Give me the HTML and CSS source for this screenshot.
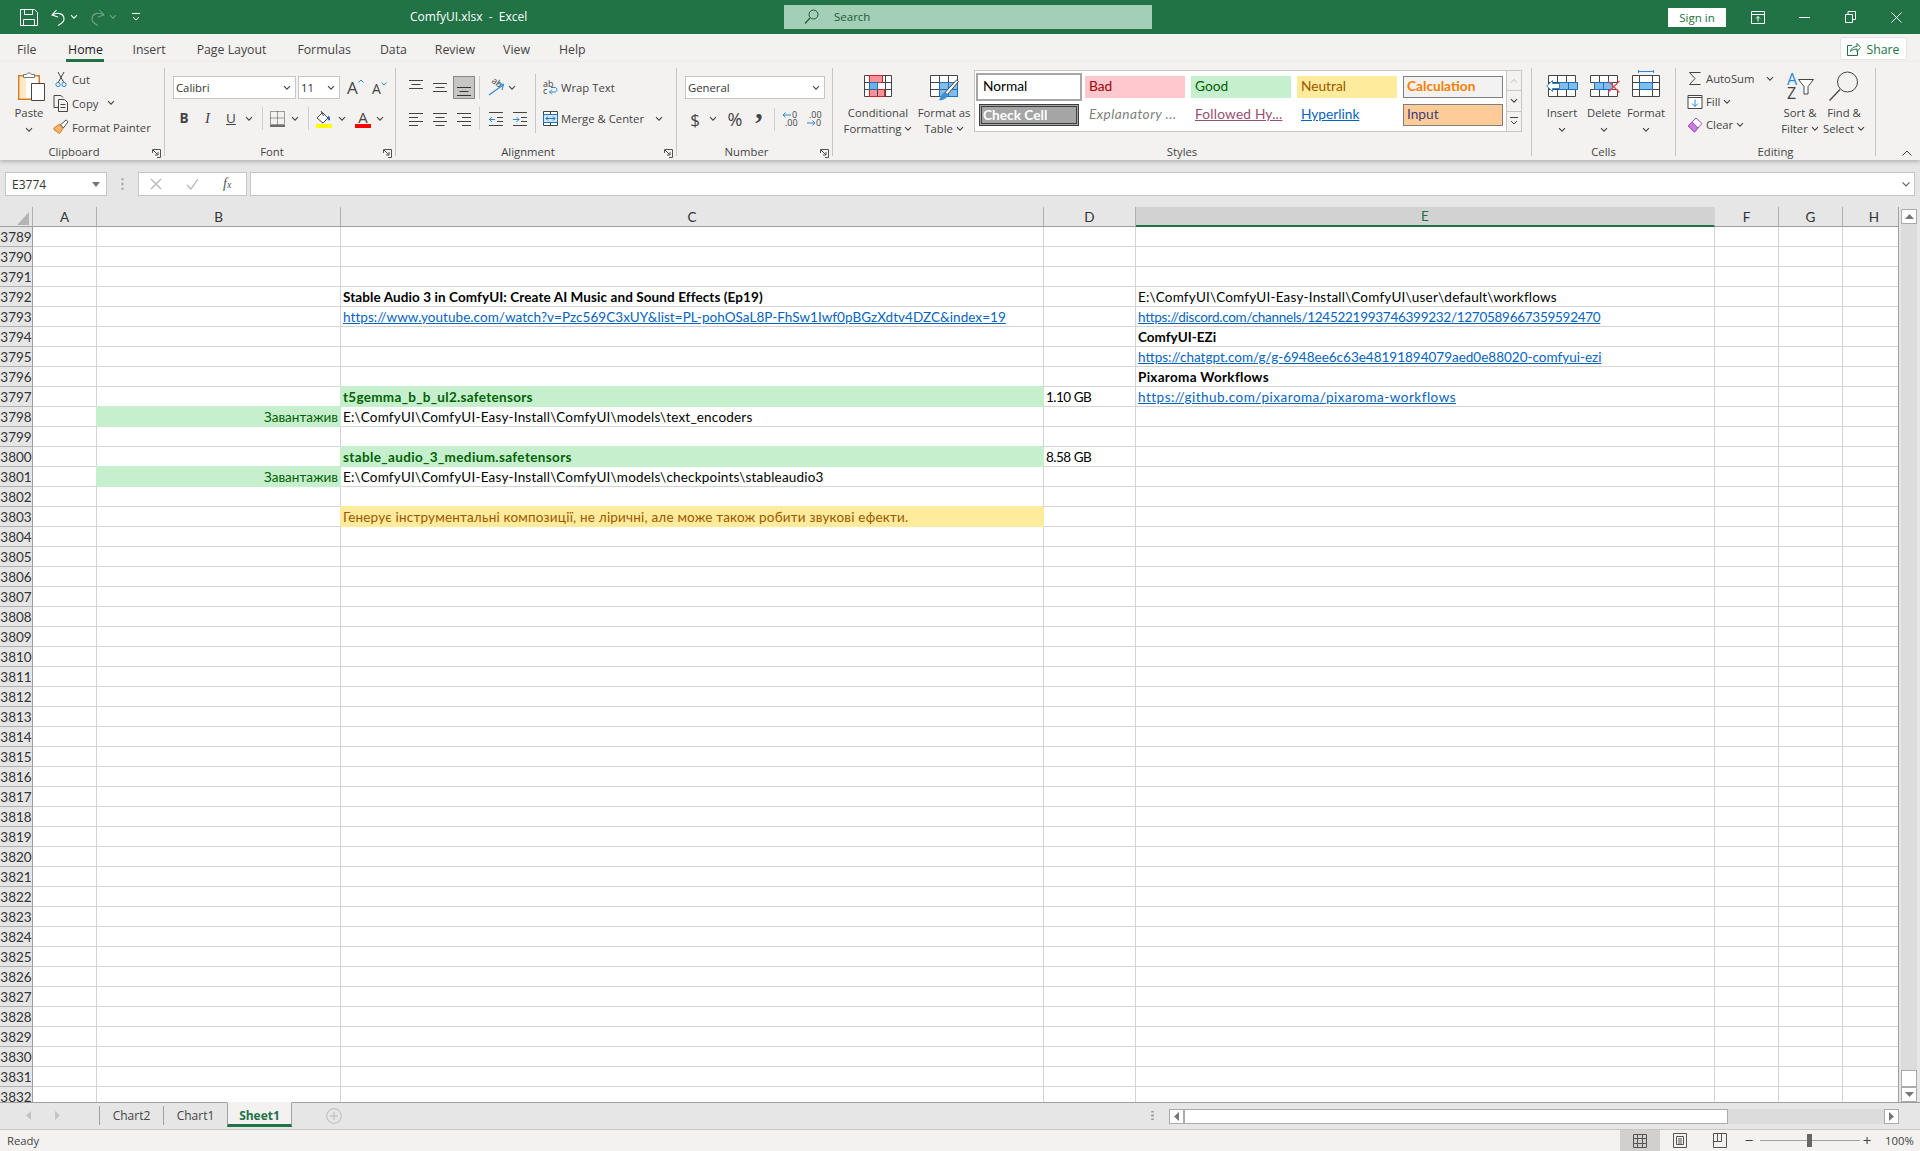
FILE: index.html
```html
<!DOCTYPE html>
<html lang="en">
<head>
<meta charset="utf-8">
<title>ComfyUI.xlsx - Excel</title>
<link rel="stylesheet" href="styles.css">
</head>
<body>
<svg class="sprite" xmlns="http://www.w3.org/2000/svg">
  <symbol id="caret" viewBox="0 0 8 6"><path d="M1 1.2l3 3 3-3" fill="none" stroke="currentColor" stroke-width="1.1"/></symbol>
  <symbol id="lines-left" viewBox="0 0 14 14"><path d="M0 1.5h14M0 5.5h9M0 9.5h14M0 13.5h9" fill="none" stroke="#444" /></symbol>
  <symbol id="lines-center" viewBox="0 0 14 14"><path d="M0 1.5h14M2.500 5.500h9M0 9.500h14M2.500 13.500h9" fill="none" stroke="#444" /></symbol>
  <symbol id="lines-right" viewBox="0 0 14 14"><path d="M0 1.5h14M5 5.5h9M0 9.500h14M5 13.500h9" fill="none" stroke="#444" /></symbol>
</svg>

<header class="titlebar">
  <div class="qat">
    <svg class="q-save" width="18" height="17" viewBox="0 0 18 17"><path d="M.5.500h14l3 3v13H.5zM4.500.500v5h8v-5M3.500 16.500v-6h11v6" fill="none" stroke="#fff"/></svg>
    <svg class="q-undo" width="14" height="17" viewBox="0 0 14 17"><path d="M5.500 1L1 6l6 2M1 6c5-3 12-2 12 4 0 3-3 5-6 6.500" fill="none" stroke="#fff" stroke-width="1.100"/></svg>
    <svg class="q-caret" width="8" height="6"><use href="#caret"/></svg>
    <svg class="q-redo" width="14" height="17" viewBox="0 0 14 17"><path d="M8.500 1L13 6 7 8M13 6C8 3 1 4 1 10c0 3 3 5 6 6.500" fill="none" stroke="#6ba587" stroke-width="1.100"/></svg>
    <svg class="q-caret dim" width="8" height="6"><use href="#caret"/></svg>
    <svg class="q-more" width="8" height="8" viewBox="0 0 8 8"><path d="M0 .5h8M1 4l3 3 3-3" fill="none" stroke="#fff"/></svg>
  </div>
  <div class="doc-title">ComfyUI.xlsx&nbsp; - &nbsp;Excel</div>
  <div class="search">
    <svg width="15" height="15" viewBox="0 0 15 15"><circle cx="9.500" cy="5.500" r="4.500" fill="none" stroke="#1b5e3b"/><path d="M6 9l-5 5.500" stroke="#1b5e3b" stroke-width="1.200"/></svg>
    <span>Search</span>
  </div>
  <button class="signin">Sign in</button>
  <div class="winbtns">
    <svg width="14" height="13" viewBox="0 0 14 13"><path d="M.5.500h13v12H.5zM.5 3.500h13M7 10.500V5.500M5 7.500l2-2 2 2" fill="none" stroke="#fff"/></svg>
    <svg width="11" height="11" viewBox="0 0 11 11"><path d="M0 5.500h11" stroke="#fff"/></svg>
    <svg width="11" height="12" viewBox="0 0 11 12"><path d="M.5 3.500h7v8h-7zM3 3.500v-3h7.500v8H7.500" fill="none" stroke="#fff"/></svg>
    <svg width="11" height="11" viewBox="0 0 11 11"><path d="M.5.500l10 10M10.500.500l-10 10" stroke="#fff"/></svg>
  </div>
</header>

<nav class="tabs">
  <span>File</span>
  <span class="on">Home</span>
  <span>Insert</span>
  <span>Page Layout</span>
  <span>Formulas</span>
  <span>Data</span>
  <span>Review</span>
  <span>View</span>
  <span>Help</span>
  <button class="share">
    <svg width="14" height="14" viewBox="0 0 14 14"><path d="M5 3.500H.5v10h10V9M3.500 9.500C4 6 7 4.500 10 4.500V1.500l3.500 4-3.500 4V7C7 7 5 8 3.500 9.500z" fill="none" stroke="#217346"/></svg>
    Share
  </button>
</nav>

<section class="ribbon">

  <div class="grp clip">
    <div class="body">
      <div class="big paste">
        <div class="big-ico">
          <svg width="28" height="30" viewBox="0 0 28 30"><path d="M.75 3.750h20.500v23.500H.75z" fill="#fff" stroke="#d97a13" stroke-width="1.500"/><path d="M2 5h6v21H2z" fill="#fde9c4"/><path d="M5.500 5.500V2.500h3C8.500.500 13.500.500 13.500 2.500h3v3z" fill="#fff" stroke="#777"/><path d="M13.500 11.500h13v17h-13z" fill="#fff" stroke="#444"/></svg>
        </div>
        <div>Paste</div>
        <svg class="car" width="8" height="6"><use href="#caret"/></svg>
      </div>
      <div class="small-col">
        <div class="small">
          <svg class="s-ico" width="16" height="17" viewBox="0 0 16 17"><path d="M5 1l5.500 10M11 1L5.500 11" stroke="#444" fill="none"/><circle cx="5" cy="13.500" r="2.100" fill="none" stroke="#2b88d8"/><circle cx="11" cy="13.500" r="2.100" fill="none" stroke="#2b88d8"/></svg>
          Cut
        </div>
        <div class="small">
          <svg class="s-ico" width="16" height="18" viewBox="0 0 16 18"><path d="M5 13.500H1V1.500h7l2 2M5.500 5.500h6l3 3v9h-9zM7.500 10.500h5M7.500 13.500h5" fill="none" stroke="#444"/></svg>
          Copy <svg class="car copy-car" width="8" height="6"><use href="#caret"/></svg>
        </div>
        <div class="small">
          <svg class="s-ico" width="17" height="16" viewBox="0 0 17 16"><path d="M1 9l6-4 4 4-4 6-6-4z" fill="#f5b26b" stroke="#d97a13"/><path d="M8 5.500l6-5 2 2-5 6.500z" fill="#fff" stroke="#444"/></svg>
          Format Painter
        </div>
      </div>
    </div>
    <div class="label"><span>Clipboard</span><svg class="launch" width="9" height="9" viewBox="0 0 9 9"><path d="M.5 4V.5h8v8H5M1 1l5 5M6 3v3H3" fill="none" stroke="#555"/></svg></div>
  </div>

  <div class="grp font">
    <div class="body stack">
      <div class="row1">
        <div class="combo w-font">Calibri<svg class="car" width="8" height="6"><use href="#caret"/></svg></div>
        <div class="combo w-size">11<svg class="car" width="8" height="6"><use href="#caret"/></svg></div>
        <span class="grow">A<svg width="6" height="4" viewBox="0 0 6 4"><path d="M.5 3.500L3 1l2.500 2.500" fill="none" stroke="#2b88d8"/></svg></span>
        <span class="shrink">A<svg width="6" height="4" viewBox="0 0 6 4"><path d="M.5.500L3 3 5.500.500" fill="none" stroke="#2b88d8"/></svg></span>
      </div>
      <div class="font-tools">
        <b class="fa">B</b>
        <i class="fa it">I</i>
        <u class="fa">U</u>
        <svg width="8" height="6"><use href="#caret"/></svg>
        <span class="vsep"></span>
        <svg width="15" height="16" viewBox="0 0 15 16"><path d="M.5.500h14v13H.5zM7.500.500v13M.500 7h14" fill="none" stroke="#444" stroke-dasharray="1 1"/><path d="M0 15h15" stroke="#222" stroke-width="1.300"/></svg>
        <svg width="8" height="6"><use href="#caret"/></svg>
        <span class="vsep"></span>
        <svg width="16" height="18" viewBox="0 0 16 18"><path d="M1 8l5.500-5.500L12 8l-5 5z" fill="#fff" stroke="#444"/><path d="M5 1l2.500 5" stroke="#444"/><path d="M12.500 5.500c2 2 2 5 .5 5-1.500 0-1.500-3-.5-5z" fill="#1f6fb5"/><path d="M0 14h16v4H0z" fill="#ff0"/></svg>
        <svg width="8" height="6"><use href="#caret"/></svg>
        <span class="fcolor">A<em></em></span>
        <svg width="8" height="6"><use href="#caret"/></svg>
      </div>
    </div>
    <div class="label"><span>Font</span><svg class="launch" width="9" height="9" viewBox="0 0 9 9"><path d="M.5 4V.5h8v8H5M1 1l5 5M6 3v3H3" fill="none" stroke="#555"/></svg></div>
  </div>

  <div class="grp align">
    <div class="body">
      <div class="stack">
        <div class="al-row">
          <span class="ab"><svg width="14" height="23" viewBox="0 0 14 23"><path d="M0 4.500h14M2.500 8.500h9M0 12.500h14" stroke="#444"/></svg></span>
          <span class="ab"><svg width="14" height="23" viewBox="0 0 14 23"><path d="M0 7.500h14M2.500 11.500h9M0 15.500h14" stroke="#444"/></svg></span>
          <span class="ab sel"><svg width="14" height="23" viewBox="0 0 14 23"><path d="M0 11.500h14M2.500 15.500h9M0 19.500h14" stroke="#333"/></svg></span>
          <span class="vsep"></span>
          <span class="ab"><svg class="ov" width="17" height="16" viewBox="0 0 17 16"><text x="3" y="2" transform="rotate(35 3 2)" class="svg-n">ab</text><path d="M1 15L15 5M10 3.500l5.500 1-1.500 5.500" stroke="#2b88d8" fill="none" stroke-width="1.100"/></svg></span>
          <svg width="8" height="6"><use href="#caret"/></svg>
        </div>
        <div class="al-row">
          <span class="ab"><svg width="14" height="14"><use href="#lines-left"/></svg></span>
          <span class="ab"><svg width="14" height="14"><use href="#lines-center"/></svg></span>
          <span class="ab"><svg width="14" height="14"><use href="#lines-right"/></svg></span>
          <span class="vsep"></span>
          <span class="ab"><svg width="14" height="14" viewBox="0 0 14 14"><path d="M0 .5h14M8 5.500h6M8 9.500h6M0 13.500h14" stroke="#444"/><path d="M6 7.500H0M3 5L.5 7.500 3 10" fill="none" stroke="#2b88d8"/></svg></span>
          <span class="ab"><svg width="14" height="14" viewBox="0 0 14 14"><path d="M0 .5h14M8 5.500h6M8 9.500h6M0 13.500h14" stroke="#444"/><path d="M0 7.500h6M3.500 5L6 7.500 3.500 10" fill="none" stroke="#2b88d8"/></svg></span>
        </div>
      </div>
      <span class="tall-sep"></span>
      <div class="stack wrap-col">
        <div class="small">
          <svg class="s-ico ov" width="15" height="15" viewBox="0 0 15 15"><text x="0" y="7" class="svg-ab">ab</text><text x="0" y="14" class="svg-ab">c</text><path d="M6.500 12h5.500c2.500 0 2.500-4.500 0-4.500H8M9 9.500l-2.500 2.500 2.500 2.500" fill="none" stroke="#2b88d8"/></svg>
          Wrap Text
        </div>
        <div class="small">
          <svg class="s-ico" width="15" height="15" viewBox="0 0 15 15"><path d="M.5.500h14v14H.5z" fill="#fff" stroke="#444"/><path d="M.5 3.500h14v8H.5z" fill="#cfe6f7" stroke="#1f6fb5"/><path d="M7.500.500v3M7.500 11.500v3" stroke="#444"/><path d="M3 7.500h9M5 5.500l-2 2 2 2M10 5.500l2 2-2 2" fill="none" stroke="#1f6fb5"/></svg>
          Merge &amp; Center <svg class="car merge-car" width="8" height="6"><use href="#caret"/></svg>
        </div>
      </div>
    </div>
    <div class="label"><span>Alignment</span><svg class="launch" width="9" height="9" viewBox="0 0 9 9"><path d="M.5 4V.5h8v8H5M1 1l5 5M6 3v3H3" fill="none" stroke="#555"/></svg></div>
  </div>

  <div class="grp number">
    <div class="body stack">
      <div class="combo w-num">General<svg class="car" width="8" height="6"><use href="#caret"/></svg></div>
      <div class="num-tools">
        <span class="dollar">$</span>
        <svg width="8" height="6"><use href="#caret"/></svg>
        <span class="pct">%</span>
        <b class="comma">,</b>
        <span class="vsep"></span>
        <svg class="ov" width="16" height="16" viewBox="0 0 16 16"><text x="10" y="7" class="svg-n">0</text><text x="3" y="15" class="svg-n">.00</text><path d="M9 4H1M3.500 1.500L1 4l2.500 2.500" fill="none" stroke="#2b88d8"/></svg>
        <svg class="ov" width="16" height="16" viewBox="0 0 16 16"><text x="3" y="7" class="svg-n">.00</text><text x="10" y="15" class="svg-n">0</text><path d="M1 12h8M6.500 9.500L9 12l-2.500 2.500" fill="none" stroke="#2b88d8"/></svg>
      </div>
    </div>
    <div class="label"><span>Number</span><svg class="launch" width="9" height="9" viewBox="0 0 9 9"><path d="M.5 4V.5h8v8H5M1 1l5 5M6 3v3H3" fill="none" stroke="#555"/></svg></div>
  </div>

  <div class="grp styles">
    <div class="body">
      <div class="big w-cond">
        <div class="big-ico">
          <svg width="28" height="22" viewBox="0 0 28 22"><path d="M.5.500h27v21H.5z" fill="#fff"/><path d="M5.500.500h13v7h-13zM5.500 14.500h15v7h-15z" fill="#f7929a"/><path d="M5.500 7.500h8v7h-8z" fill="#6fb0e6"/><path d="M.5.500h27v21H.5zM5.500.500v21M21.500.500v21M.5 7.500h27M.5 14.500h27M13.500 14.500v7" fill="none" stroke="#444"/><path d="M5.500.500h13v7h-13zM5.500 14.500h15v7h-15z" fill="none" stroke="#d9202b"/><path d="M5.500 7.500h8v7h-8z" fill="none" stroke="#1f6fb5"/></svg>
        </div>
        <div>Conditional</div>
        <div>Formatting <svg class="car" width="8" height="6"><use href="#caret"/></svg></div>
      </div>
      <div class="big w-fat">
        <div class="big-ico">
          <svg width="30" height="27" viewBox="0 0 30 27"><path d="M1.500.500h27v21h-27z" fill="#fff"/><path d="M10.500 7.500h18v14h-18z" fill="#83bbeb"/><path d="M1.500.500h27v21h-27zM10.500.500v21M19.500.500v21M1.500 7.500h27M1.500 14.500h27" fill="none" stroke="#444"/><path d="M10.500 7.500h18v14h-18zM19.500 7.500v14M10.500 14.500h18" fill="none" stroke="#1f6fb5"/><path d="M29.500 6.500L18.500 19.500l-2.500-2L27.500 5z" fill="#fff" stroke="#444"/><path d="M16 17.500c3 0 3.500 4 .5 6s-6 2-7 1.500c2.500-1 2-7 6.500-7.500z" fill="#3d8fd1"/></svg>
        </div>
        <div>Format as</div>
        <div>Table <svg class="car" width="8" height="6"><use href="#caret"/></svg></div>
      </div>
      <div class="gallery">
        <div class="gal-grid">
          <div class="st st-normal">Normal</div>
          <div class="st st-bad">Bad</div>
          <div class="st st-good">Good</div>
          <div class="st st-neutral">Neutral</div>
          <div class="st st-calc">Calculation</div>
          <div class="st st-check">Check Cell</div>
          <div class="st st-expl">Explanatory ...</div>
          <div class="st st-follow">Followed Hy...</div>
          <div class="st st-link">Hyperlink</div>
          <div class="st st-input">Input</div>
        </div>
        <div class="gal-btns">
          <span class="dimmed"><svg width="8" height="6" viewBox="0 0 8 6"><path d="M1 4.500l3-3 3 3" fill="none" stroke="#bbb"/></svg></span>
          <span><svg width="8" height="6"><use href="#caret"/></svg></span>
          <span><svg width="8" height="8" viewBox="0 0 8 8"><path d="M0 .5h8M1 4l3 3 3-3" fill="none" stroke="#444"/></svg></span>
        </div>
      </div>
    </div>
    <div class="label"><span class="full">Styles</span></div>
  </div>

  <div class="grp cells">
    <div class="body">
      <div class="big w-cell">
        <div class="big-ico">
          <svg width="32" height="22" viewBox="0 0 32 22"><path d="M2.500.500h27v21h-27zM11.500.500v21M20.500.500v21M2.500 7.500h27M2.500 14.500h27" fill="#fff" stroke="#444"/><path d="M13.500 7.500h18v7h-18z" fill="#83bbeb"/><path d="M13.500 7.500h18v7h-18zM22.500 7.500v7" fill="none" stroke="#1f6fb5"/><path d="M.7 11L6.500 5.500v3h7v5h-7v3z" fill="#fff" stroke="#2b88d8"/></svg>
        </div>
        <div>Insert</div>
        <svg class="car" width="8" height="6"><use href="#caret"/></svg>
      </div>
      <div class="big w-cell">
        <div class="big-ico">
          <svg width="32" height="22" viewBox="0 0 32 22"><path d="M2.500.500h27v7h-23v7h23v7h-27v-7h4v-7h-4zM11.500.500v7M20.500.500v7M11.500 14.500v7M20.500 14.500v7" fill="#fff" stroke="#444"/><path d="M6.500 7.500h18v7h-18z" fill="#83bbeb"/><path d="M6.500 7.500h18v7h-18zM15.500 7.500v7" fill="none" stroke="#1f6fb5"/><path d="M20 6l11.500 11.500M31.500 6L20 17.500" stroke="#e8474f" stroke-width="1.200"/></svg>
        </div>
        <div>Delete</div>
        <svg class="car" width="8" height="6"><use href="#caret"/></svg>
      </div>
      <div class="big w-cell">
        <div class="big-ico">
          <svg width="28" height="27" viewBox="0 0 28 27"><path d="M6.500 1.500h15M6.500 0v3M21.500 0v3" stroke="#2b88d8" fill="none"/><path d="M.5 5.500h27v21H.5zM7.500 5.500v21M20.500 5.500v21M.5 12.500h27M.5 19.500h27" fill="#fff" stroke="#444"/><path d="M7.500 12.500h13v7h-13z" fill="#83bbeb" stroke="#1f6fb5"/></svg>
        </div>
        <div>Format</div>
        <svg class="car" width="8" height="6"><use href="#caret"/></svg>
      </div>
    </div>
    <div class="label"><span class="full">Cells</span></div>
  </div>

  <div class="grp editing">
    <div class="body">
      <div class="edit-col">
        <div class="e-row">
          <svg class="s-ico" width="13" height="13" viewBox="0 0 13 13"><path d="M12 .5H1l5.500 6L1 12.500h11" fill="none" stroke="#444"/></svg>
          AutoSum <svg class="car sum-car" width="8" height="6"><use href="#caret"/></svg>
        </div>
        <div class="e-row">
          <svg class="s-ico" width="15" height="14" viewBox="0 0 15 14"><path d="M.5.500h14v13H.5z" fill="#fff" stroke="#444"/><path d="M.5 2.500h14" stroke="#444"/><path d="M7.500 4.500v7M4.500 8.500l3 3 3-3" fill="none" stroke="#2b88d8"/></svg>
          Fill <svg class="car" width="8" height="6"><use href="#caret"/></svg>
        </div>
        <div class="e-row">
          <svg class="s-ico" width="16" height="16" viewBox="0 0 16 16"><path d="M1 9L9 1l6 5.500L7.500 15z" fill="#fff" stroke="#a64fc0"/><path d="M1 9L5 5l6 6-3.500 4z" fill="#c77fdb" stroke="#a64fc0"/></svg>
          Clear <svg class="car" width="8" height="6"><use href="#caret"/></svg>
        </div>
      </div>
      <div class="big w-find">
        <div class="big-ico">
          <svg class="ov" width="30" height="28" viewBox="0 0 30 28"><text x="2" y="13" class="svg-az az-a">A</text><text x="2" y="27" class="svg-az">Z</text><path d="M13.500 7.500h15l-5.500 7v7.500h-4v-7.500z" fill="#fff" stroke="#444"/></svg>
        </div>
        <div>Sort &amp;</div>
        <div>Filter <svg class="car" width="8" height="6"><use href="#caret"/></svg></div>
      </div>
      <div class="big w-find">
        <div class="big-ico">
          <svg class="ov" width="30" height="28" viewBox="0 0 30 28"><circle cx="18.500" cy="10" r="10" fill="none" stroke="#444"/><path d="M11 17.500L.5 28.500" stroke="#444" stroke-width="1.200"/></svg>
        </div>
        <div>Find &amp;</div>
        <div>Select <svg class="car" width="8" height="6"><use href="#caret"/></svg></div>
      </div>
    </div>
    <div class="label"><span class="full">Editing</span></div>
  </div>

  <div class="collapse">
    <svg width="10" height="6" viewBox="0 0 10 6"><path d="M.5 5.500L5 1l4.500 4.500" fill="none" stroke="#444"/></svg>
  </div>
</section>

<section class="formula">
  <div class="namebox">E3774<svg width="8" height="5" viewBox="0 0 8 5"><path d="M0 0h8L4 5z" fill="#777"/></svg></div>
  <div class="dots"></div>
  <div class="fxbox">
    <svg width="12" height="12" viewBox="0 0 12 12"><path d="M1 1l10 10M11 1L1 11" stroke="#b5b5b5" stroke-width="1.300"/></svg>
    <svg width="13" height="12" viewBox="0 0 13 12"><path d="M1 7l4 4 7-10" fill="none" stroke="#b5b5b5" stroke-width="1.300"/></svg>
    <i class="fx">f<small>x</small></i>
  </div>
  <div class="fxinput"><svg width="10" height="7"><use href="#caret"/></svg></div>
</section>

<section class="sheet">
  <div class="gridwrap">
    <table class="grid">
      <colgroup>
        <col class="c-rh"><col class="c-a"><col class="c-b"><col class="c-c"><col class="c-d"><col class="c-e"><col class="c-f"><col class="c-g"><col class="c-h">
      </colgroup>
      <thead>
        <tr><th class="corner"><svg width="12" height="13" viewBox="0 0 12 13"><path d="M12 0v13H0z" fill="#b5b5b5"/></svg></th><th>A</th><th>B</th><th>C</th><th>D</th><th class="sel-col">E</th><th>F</th><th>G</th><th class="cut-col">H</th></tr>
      </thead>
      <tbody>
        <tr><th>3789</th><td></td><td></td><td></td><td></td><td></td><td></td><td></td><td></td></tr>
        <tr><th>3790</th><td></td><td></td><td></td><td></td><td></td><td></td><td></td><td></td></tr>
        <tr><th>3791</th><td></td><td></td><td></td><td></td><td></td><td></td><td></td><td></td></tr>
        <tr><th>3792</th><td></td><td></td><td class="strong t-title">Stable Audio 3 in ComfyUI: Create AI Music and Sound Effects (Ep19)</td><td></td><td>E:\ComfyUI\ComfyUI-Easy-Install\ComfyUI\user\default\workflows</td><td></td><td></td><td></td></tr>
        <tr><th>3793</th><td></td><td></td><td class="link l-yt">https://www.youtube.com/watch?v=Pzc569C3xUY&amp;list=PL-pohOSaL8P-FhSw1Iwf0pBGzXdtv4DZC&amp;index=19</td><td></td><td class="link l-dc">https://discord.com/channels/1245221993746399232/1270589667359592470</td><td></td><td></td><td></td></tr>
        <tr><th>3794</th><td></td><td></td><td></td><td></td><td class="strong t-ezi">ComfyUI-EZi</td><td></td><td></td><td></td></tr>
        <tr><th>3795</th><td></td><td></td><td></td><td></td><td class="link l-gpt">https://chatgpt.com/g/g-6948ee6c63e48191894079aed0e88020-comfyui-ezi</td><td></td><td></td><td></td></tr>
        <tr><th>3796</th><td></td><td></td><td></td><td></td><td class="strong">Pixaroma Workflows</td><td></td><td></td><td></td></tr>
        <tr><th>3797</th><td></td><td></td><td class="good strong">t5gemma_b_b_ul2.safetensors</td><td class="size">1.10 GB</td><td class="link l-gh">https://github.com/pixaroma/pixaroma-workflows</td><td></td><td></td><td></td></tr>
        <tr><th>3798</th><td></td><td class="good right">Завантажив</td><td>E:\ComfyUI\ComfyUI-Easy-Install\ComfyUI\models\text_encoders</td><td></td><td></td><td></td><td></td><td></td></tr>
        <tr><th>3799</th><td></td><td></td><td></td><td></td><td></td><td></td><td></td><td></td></tr>
        <tr><th>3800</th><td></td><td></td><td class="good strong t-sa">stable_audio_3_medium.safetensors</td><td class="size">8.58 GB</td><td></td><td></td><td></td><td></td></tr>
        <tr><th>3801</th><td></td><td class="good right">Завантажив</td><td>E:\ComfyUI\ComfyUI-Easy-Install\ComfyUI\models\checkpoints\stableaudio3</td><td></td><td></td><td></td><td></td><td></td></tr>
        <tr><th>3802</th><td></td><td></td><td></td><td></td><td></td><td></td><td></td><td></td></tr>
        <tr><th>3803</th><td></td><td></td><td class="neutral">Генерує інструментальні композиції, не ліричні, але може також робити звукові ефекти.</td><td></td><td></td><td></td><td></td><td></td></tr>
        <tr><th>3804</th><td></td><td></td><td></td><td></td><td></td><td></td><td></td><td></td></tr>
        <tr><th>3805</th><td></td><td></td><td></td><td></td><td></td><td></td><td></td><td></td></tr>
        <tr><th>3806</th><td></td><td></td><td></td><td></td><td></td><td></td><td></td><td></td></tr>
        <tr><th>3807</th><td></td><td></td><td></td><td></td><td></td><td></td><td></td><td></td></tr>
        <tr><th>3808</th><td></td><td></td><td></td><td></td><td></td><td></td><td></td><td></td></tr>
        <tr><th>3809</th><td></td><td></td><td></td><td></td><td></td><td></td><td></td><td></td></tr>
        <tr><th>3810</th><td></td><td></td><td></td><td></td><td></td><td></td><td></td><td></td></tr>
        <tr><th>3811</th><td></td><td></td><td></td><td></td><td></td><td></td><td></td><td></td></tr>
        <tr><th>3812</th><td></td><td></td><td></td><td></td><td></td><td></td><td></td><td></td></tr>
        <tr><th>3813</th><td></td><td></td><td></td><td></td><td></td><td></td><td></td><td></td></tr>
        <tr><th>3814</th><td></td><td></td><td></td><td></td><td></td><td></td><td></td><td></td></tr>
        <tr><th>3815</th><td></td><td></td><td></td><td></td><td></td><td></td><td></td><td></td></tr>
        <tr><th>3816</th><td></td><td></td><td></td><td></td><td></td><td></td><td></td><td></td></tr>
        <tr><th>3817</th><td></td><td></td><td></td><td></td><td></td><td></td><td></td><td></td></tr>
        <tr><th>3818</th><td></td><td></td><td></td><td></td><td></td><td></td><td></td><td></td></tr>
        <tr><th>3819</th><td></td><td></td><td></td><td></td><td></td><td></td><td></td><td></td></tr>
        <tr><th>3820</th><td></td><td></td><td></td><td></td><td></td><td></td><td></td><td></td></tr>
        <tr><th>3821</th><td></td><td></td><td></td><td></td><td></td><td></td><td></td><td></td></tr>
        <tr><th>3822</th><td></td><td></td><td></td><td></td><td></td><td></td><td></td><td></td></tr>
        <tr><th>3823</th><td></td><td></td><td></td><td></td><td></td><td></td><td></td><td></td></tr>
        <tr><th>3824</th><td></td><td></td><td></td><td></td><td></td><td></td><td></td><td></td></tr>
        <tr><th>3825</th><td></td><td></td><td></td><td></td><td></td><td></td><td></td><td></td></tr>
        <tr><th>3826</th><td></td><td></td><td></td><td></td><td></td><td></td><td></td><td></td></tr>
        <tr><th>3827</th><td></td><td></td><td></td><td></td><td></td><td></td><td></td><td></td></tr>
        <tr><th>3828</th><td></td><td></td><td></td><td></td><td></td><td></td><td></td><td></td></tr>
        <tr><th>3829</th><td></td><td></td><td></td><td></td><td></td><td></td><td></td><td></td></tr>
        <tr><th>3830</th><td></td><td></td><td></td><td></td><td></td><td></td><td></td><td></td></tr>
        <tr><th>3831</th><td></td><td></td><td></td><td></td><td></td><td></td><td></td><td></td></tr>
        <tr><th>3832</th><td></td><td></td><td></td><td></td><td></td><td></td><td></td><td></td></tr>
      </tbody>
    </table>
  </div>
  <aside class="vscroll">
    <span class="sb-btn"><svg width="9" height="5" viewBox="0 0 9 5"><path d="M4.500 0L9 5H0z" fill="#777"/></svg></span>
    <span class="sb-track"></span>
    <span class="sb-thumb"></span>
    <span class="sb-btn"><svg width="9" height="5" viewBox="0 0 9 5"><path d="M0 0h9L4.500 5z" fill="#777"/></svg></span>
  </aside>
</section>

<section class="sheetbar">
  <div class="sheet-nav">
    <svg width="5" height="9" viewBox="0 0 5 9"><path d="M5 0v9L0 4.500z" fill="#c4c4c4"/></svg>
    <svg width="5" height="9" viewBox="0 0 5 9"><path d="M0 0v9l5-4.500z" fill="#c4c4c4"/></svg>
  </div>
  <div class="sheet-tab">Chart2</div>
  <div class="sheet-tab">Chart1</div>
  <div class="sheet-tab active">Sheet1</div>
  <div class="add-sheet"><svg width="16" height="16" viewBox="0 0 16 16"><circle cx="8" cy="8" r="7.300" fill="none" stroke="#c4c4c4" stroke-width="1.200"/><path d="M8 4v8M4 8h8" stroke="#c4c4c4" stroke-width="1.300"/></svg></div>
  <div class="splitter"></div>
  <div class="hscroll">
    <span class="hb"><svg width="5" height="9" viewBox="0 0 5 9"><path d="M5 0v9L0 4.500z" fill="#777"/></svg></span>
    <span class="hthumb"></span>
    <span class="htrack"></span>
    <span class="hb"><svg width="5" height="9" viewBox="0 0 5 9"><path d="M0 0v9l5-4.500z" fill="#777"/></svg></span>
  </div>
</section>

<footer class="status">
  <span class="ready">Ready</span>
  <div class="views">
    <span class="view on"><svg width="14" height="14" viewBox="0 0 14 14"><path d="M.5.500h13v13H.5zM4.500.500v13M9.500.500v13M.5 4.500h13M.5 9.500h13" fill="none" stroke="#555"/></svg></span>
    <span class="view"><svg width="14" height="15" viewBox="0 0 14 15"><path d="M.5.500h13v14H.5zM3.500 3.500h7v8h-7zM5 6h4M5 8h4M5 10h4" fill="none" stroke="#555"/></svg></span>
    <span class="view"><svg width="14" height="15" viewBox="0 0 14 15"><path d="M.5.500h13v14H.5zM.5 8.500h8M8.500.500v8M4.500.500v8" fill="none" stroke="#555"/></svg></span>
  </div>
  <div class="zoom">
    <span class="zm">−</span>
    <span class="slider"><em></em></span>
    <span class="zm">+</span>
    <span class="pctz">100%</span>
  </div>
</footer>
</body>
</html>
```

FILE: styles.css
```css
* { box-sizing: border-box; }
html, body { margin: 0; height: 100%; overflow: hidden; }
body {
  font-family: "Open Sans", sans-serif;
  font-size: 11.3px;
  color: #444;
  background: #e6e6e6;
}
svg { display: block; flex: none; }
svg.ov { overflow: visible; }
.sprite { display: none; }
button { font: inherit; border: 0; padding: 0; }

/* title bar */
.titlebar {
  height: 34px;
  background: #217346;
  color: #fff;
  display: flex;
  align-items: center;
}
.qat { width: 410px; display: flex; align-items: center; padding-left: 20px; color: #fff; }
.q-undo { margin-left: 13px; }
.q-caret { margin-left: 5px; }
.q-caret.dim { color: #6ba587; margin-left: 4px; }
.q-redo { margin-left: 13px; }
.q-more { margin-left: 15px; }
.doc-title { width: 374px; font-size: 12px; padding-bottom: 2px; }
.search {
  width: 368px;
  height: 24px;
  background: #a3cfb7;
  color: #1b5e3b;
  display: flex;
  align-items: center;
  padding: 0 0 1px 20px;
  gap: 15px;
  font-size: 11.5px;
}
.signin {
  margin-left: auto;
  width: 58px;
  height: 19px;
  background: #fff;
  color: #217346;
  font-size: 11.5px;
}
.winbtns { width: 194px; padding-left: 9px; display: grid; grid-template-columns: repeat(4, 46px); justify-items: center; align-items: center; }

/* tabs */
.tabs {
  height: 28px;
  background: #f3f2f1;
  display: flex;
  gap: 29px;
  padding-left: 17px;
  line-height: 31px;
  font-size: 12.3px;
}
.tabs .on { width: 38px; text-align: center; color: #222; font-weight: 500; border-bottom: 3px solid #217346; margin-left: 1px; margin-right: -1px; }
.tabs span:nth-child(3) { margin-right: 2px; }
.tabs span:nth-child(4) { margin-right: 2px; }
.tabs span:nth-child(6) { margin-right: -1px; }
.tabs span:nth-child(7) { margin-right: -1px; }
.share {
  margin: 3px 13px 2px auto;
  width: 67px;
  background: #fff;
  border: 1px solid #e4e3e1;
  border-radius: 2px;
  color: #217346;
  display: flex;
  align-items: center;
  justify-content: center;
  gap: 5px;
  font-size: 12.3px;
  padding-top: 1px;
}

/* ribbon */
.ribbon {
  height: 98px;
  background: #f3f2f1;
  display: flex;
  padding-top: 6px;
  position: relative;
  box-shadow: 0 2px 4px rgba(0,0,0,.22);
}
.grp {
  height: 88px;
  border-right: 1px solid #c8c6c4;
  display: flex;
  flex-direction: column;
}
.clip { width: 165px; }
.font { width: 231px; }
.align { width: 281px; }
.number { width: 156px; }
.styles { width: 699px; }
.cells { width: 144px; }
.editing { width: 200px; }
.body { height: 76px; display: flex; }
.label { height: 12px; line-height: 16px; display: flex; }
.label span { flex: 1; text-align: center; padding-right: 4px; }
.launch { margin-top: 5px; margin-right: 3px; }
.label .full { padding: 0; }

.big {
  display: flex;
  flex-direction: column;
  align-items: center;
  line-height: 16px;
  white-space: nowrap;
}
.big > .car { margin-top: 6px; }
.big div .car { display: inline-block; vertical-align: 1px; }
.big-ico { height: 37px; display: flex; align-items: flex-end; padding-bottom: 8px; }
.small { height: 22px; margin-bottom: 2px; display: flex; align-items: center; white-space: nowrap; }
.s-ico { margin-right: 4px; }
.car { color: #444; }

.clip .body { padding-left: 14px; }
.paste { width: 30px; }
.paste .big-ico { padding-bottom: 3px; padding-left: 6px; }
.small-col { margin-left: 9px; }
.small-col .s-ico { width: 16px; margin-right: 3px; }
.copy-car { margin-left: 9px; }

.stack { display: flex; flex-direction: column; padding-top: 8px; gap: 8px; }
.font .body { padding-left: 8px; }
.row1 { display: flex; align-items: center; }
.combo {
  height: 23px;
  background: #fff;
  border: 1px solid #c8c6c4;
  display: flex;
  align-items: center;
  justify-content: space-between;
  padding: 0 4px 0 2px;
  color: #333;
}
.w-font { width: 123px; margin-right: 2px; }
.w-size { width: 42px; }
.w-num { width: 140px; }
.grow, .shrink { color: #444; line-height: 1; display: flex; }
.grow { margin-left: 7px; width: 25px; font-size: 17px; }
.shrink { width: 16px; font-size: 14px; padding-top: 3px; }
.font-tools {
  display: grid;
  grid-template-columns: 22px 25px 22px 14px 12px 19px 16px 11px 20px 16px 26px 8px;
  justify-items: center;
  align-items: center;
  height: 23px;
}
.fa { font-size: 13.5px; line-height: 1; }
.it { font-family: "Liberation Serif", serif; font-size: 15px; }
.fcolor { display: flex; flex-direction: column; align-items: center; font-size: 15px; line-height: 14px; width: 16px; }
.fcolor em { display: block; width: 16px; height: 4px; background: #f00; }
.vsep { width: 1px; height: 23px; background: #d0cfcd; }

.align .body { padding-left: 8px; }
.al-row { display: flex; align-items: center; height: 23px; }
.ab { width: 24px; height: 23px; display: flex; align-items: center; justify-content: center; }
.ab.sel { width: 22px; margin: 0 1px; background: #c8c6c4; border: 1px solid #8a8886; }
.al-row .vsep { margin: 0 4px 0 3px; }
.tall-sep { width: 1px; height: 59px; margin: 6px 7px 0 3px; background: #c8c6c4; }
.wrap-col .small { height: 23px; margin: 0; }
.wrap-col .s-ico { margin-right: 3px; }
.merge-car { margin-left: 11px; }

.number .body { padding-left: 8px; }
.num-tools {
  display: grid;
  grid-template-columns: 20px 16px 28px 20px 10px 22px 26px;
  justify-items: center;
  align-items: center;
  height: 23px;
}
.dollar { font-size: 17px; }
.pct { font-size: 18px; }
.comma { font-size: 30px; line-height: 16px; font-family: "Liberation Serif", serif; margin-top: -22px; }
.svg-n { font: 9px "Open Sans", sans-serif; fill: #444; }
.svg-ab { font: 9px "Open Sans", sans-serif; fill: #444; }
.svg-az { font: 16px "Open Sans", sans-serif; fill: #444; }
.az-a { fill: #2b88d8; }

.styles .body { padding-left: 7px; }
.w-cond { width: 76px; }
.w-fat { width: 56px; }
.w-fat .big-ico { padding-bottom: 3px; }
.gallery {
  width: 548px;
  height: 62px;
  margin: 2px 0 0 2px;
  background: #fff;
  border: 1px solid #c8c6c4;
  display: flex;
}
.gal-grid {
  width: 532px;
  padding: 5px 0 0 4px;
  display: grid;
  grid-template-columns: repeat(5, 100px);
  grid-auto-rows: 22px;
  gap: 6px;
}
.st {
  font-family: Lato, sans-serif;
  font-size: 13.7px;
  line-height: 20px;
  padding-left: 4px;
  white-space: nowrap;
}
.st-normal { color: #000; outline: 2px solid #a6a6a6; outline-offset: 1px; }
.st-bad { background: #ffc7ce; color: #9c0006; }
.st-good { background: #c6efce; color: #006100; }
.st-neutral { background: #ffeb9c; color: #9c5700; }
.st-calc { background: #f2f2f2; color: #fa7d00; border: 1px solid #7f7f7f; font-weight: 700; padding-left: 3px; line-height: 18px; }
.st-check { background: #a5a5a5; color: #fff; font-weight: 700; border: 3px double #3f3f3f; padding-left: 1px; line-height: 15px; }
.st-expl { color: #7f7f7f; font-style: italic; letter-spacing: .45px; }
.st-follow { color: #954f72; letter-spacing: .2px; }
.st-follow, .st-link { text-decoration: underline; }
.st-link { color: #0563c1; }
.st-input { background: #fc9; color: #3f3f76; border: 1px solid #7f7f7f; padding-left: 3px; line-height: 18px; }
.gal-btns { width: 15px; display: flex; flex-direction: column; }
.gal-btns span {
  flex: 1;
  border-left: 1px solid #c8c6c4;
  border-bottom: 1px solid #c8c6c4;
  background: #f3f2f1;
  display: flex;
  align-items: center;
  justify-content: center;
}
.gal-btns span:last-child { border-bottom: 0; }

.cells .body { padding-left: 9px; }
.w-cell { width: 42px; }

.editing .body { padding-left: 11px; }
.edit-col { width: 91px; margin-top: -1px; }
.e-row { height: 23px; display: flex; align-items: center; gap: 3px; white-space: nowrap; }
.e-row .s-ico { margin: 0; width: 16px; }
.sum-car { margin-left: 9px; }
.w-find { width: 44px; }
.w-find .big-ico { padding-bottom: 5px; }
.collapse { align-self: flex-end; margin-left: 26px; padding-bottom: 4px; }

/* formula bar */
.formula {
  height: 47px;
  padding: 12px 5px 11px 5px;
  display: flex;
  color: #333;
}
.namebox {
  width: 102px;
  background: #fff;
  border: 1px solid #c6c6c6;
  display: flex;
  align-items: center;
  justify-content: space-between;
  padding: 0 6px;
  font-size: 12px;
}
.dots { width: 31px; padding: 6px 14px; background: radial-gradient(circle, #aaa 1px, transparent 1.500px) center / 3px 5px repeat-y content-box; }
.fxbox {
  width: 109px;
  background: #fff;
  border: 1px solid #c6c6c6;
  display: flex;
  align-items: center;
  padding-left: 11px;
  gap: 24px;
}
.fx { font-family: "Liberation Serif", serif; font-size: 14px; color: #555; }
.fx small { font-size: 10px; }
.fxinput {
  flex: 1;
  margin-left: 3px;
  background: #fff;
  border: 1px solid #c6c6c6;
  display: flex;
  align-items: center;
  justify-content: flex-end;
  padding-right: 3px;
  color: #666;
}

/* sheet */
.sheet { height: 895px; display: flex; }
.gridwrap { width: 1899px; overflow: hidden; border-right: 1px solid #a0a0a0; }
.grid {
  table-layout: fixed;
  border-collapse: separate;
  border-spacing: 0;
  width: 1899px;
  font-family: Lato, sans-serif;
  font-size: 13.5px;
  color: #000;
  background: #fff;
}
.c-rh { width: 33px; }
.c-a { width: 64px; }
.c-b { width: 244px; }
.c-c { width: 703px; }
.c-d { width: 92px; }
.c-e { width: 579px; }
.c-f { width: 64px; }
.c-g { width: 64px; }
.c-h { width: 56px; }
.grid th {
  height: 20px;
  padding: 0;
  background: #e6e6e6;
  font-weight: 400;
  color: #333;
  border-right: 1px solid #b0b0b0;
  border-bottom: 1px solid #b0b0b0;
}
.grid thead th { border-bottom-color: #9f9f9f; }
.grid tbody th { border-right-color: #9f9f9f; }
.grid td {
  height: 20px;
  padding: 0 2px;
  border-right: 1px solid #d4d4d4;
  border-bottom: 1px solid #d4d4d4;
  white-space: nowrap;
  overflow: hidden;
  letter-spacing: .2px;
}
.grid .corner { padding: 4px 0 0 17px; }
.grid .sel-col { background: #d2d2d2; color: #217346; border-bottom: 2px solid #217346; border-right-color: #d2d2d2; }
.grid .cut-col { padding-left: 7px; }
.grid td.strong { font-weight: 700; letter-spacing: .3px; }
.grid td.t-title { letter-spacing: .09px; }
.grid td.t-ezi { letter-spacing: 0; }
.grid td.t-sa { letter-spacing: .37px; }
.grid td.link { color: #0563c1; text-decoration: underline; }
.grid td.l-yt { letter-spacing: .055px; }
.grid td.l-dc { letter-spacing: -.27px; }
.grid td.l-gpt { letter-spacing: 0; }
.grid td.l-gh { letter-spacing: .49px; }
.grid td.size { letter-spacing: -.5px; }
.grid td.right { text-align: right; letter-spacing: 0; }
.grid td.good { background: #c6efce; color: #006100; border-color: #c6efce; box-shadow: -1px -1px 0 #c6efce; }
.grid td.neutral { background: #ffeb9c; color: #9c5700; border-color: #ffeb9c; box-shadow: -1px -1px 0 #ffeb9c; }

.vscroll {
  width: 21px;
  padding: 2px 3px 0 2px;
  display: flex;
  flex-direction: column;
}
.sb-btn {
  height: 15px;
  flex: none;
  background: #fff;
  border: 1px solid #ababab;
  display: flex;
  align-items: center;
  justify-content: center;
}
.sb-track { flex: 1; background: #dcdcdc; }
.sb-thumb { height: 17px; flex: none; background: #fff; border: 1px solid #ababab; }

/* sheet tabs */
.sheetbar {
  height: 28px;
  border-top: 1px solid #9f9f9f;
  border-bottom: 1px solid #c6c6c6;
  background: #e6e6e6;
  display: flex;
}
.sheet-nav {
  width: 100px;
  margin: 3px 0 4px;
  border-right: 1px solid #a0a0a0;
  display: flex;
  align-items: center;
  gap: 24px;
  padding-left: 26px;
}
.sheet-tab {
  width: 64px;
  margin: 3px 0 4px;
  border-right: 1px solid #a0a0a0;
  display: flex;
  align-items: center;
  justify-content: center;
  font-size: 12px;
  color: #444;
}
.sheet-tab.active {
  margin: -1px 0 2px -1px;
  height: 25px;
  width: 65px;
  padding-top: 3px;
  background: #f3f2f1;
  border: 1px solid #a0a0a0;
  border-top-color: #f3f2f1;
  border-bottom: 3px solid #217346;
  color: #217346;
  font-weight: 700;
}
.add-sheet { margin: 5px 0 0 34px; }
.splitter {
  width: 24px;
  margin: 8px 0 9px 798px;
  background: radial-gradient(circle, #999 1px, transparent 1.500px) center / 3px 4px repeat-y;
}
.hscroll { width: 730px; height: 15px; margin: 6px 0 0 5px; display: flex; }
.hb {
  width: 15px;
  background: #fff;
  border: 1px solid #ababab;
  display: flex;
  align-items: center;
  justify-content: center;
}
.hthumb { width: 544px; background: #fff; border: 1px solid #ababab; }
.htrack { flex: 1; background: #dcdcdc; }

/* status */
.status {
  height: 21px;
  background: #f3f2f1;
  display: flex;
  align-items: center;
  font-size: 11.3px;
}
.ready { padding-left: 7px; width: 1620px; }
.views { display: flex; height: 21px; }
.view { width: 40px; display: flex; align-items: center; justify-content: center; }
.view.on { background: #d2d0ce; }
.zoom { display: flex; align-items: center; padding-left: 2px; }
.zm { width: 14px; text-align: center; font-size: 15px; line-height: 1; }
.slider { width: 100px; height: 1px; margin: 0 0 0 4px; background: #a0a0a0; position: relative; }
.slider em { position: absolute; left: 47px; top: -6px; width: 5px; height: 13px; background: #666; }
.pctz { margin-left: 11px; }
```
